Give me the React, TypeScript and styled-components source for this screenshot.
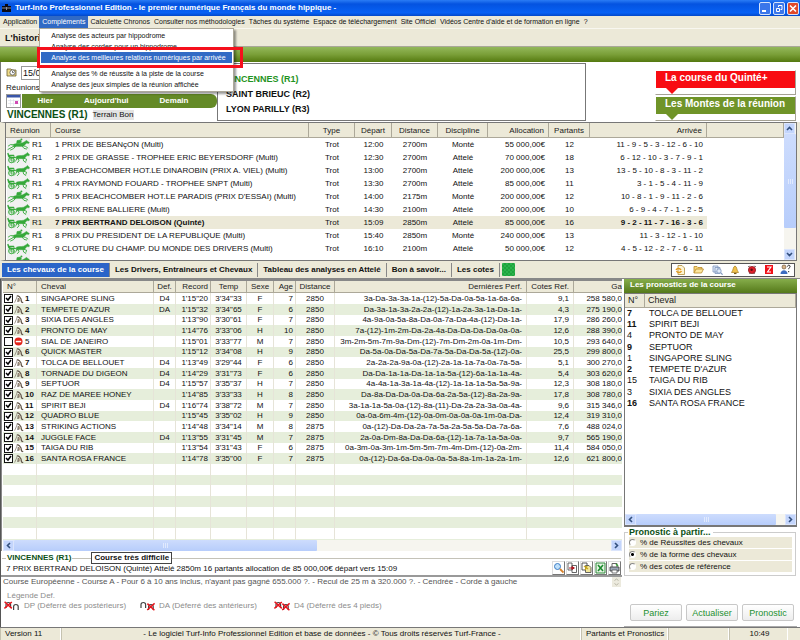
import React from 'react';
import styled, { createGlobalStyle, css } from 'styled-components';

const sans = '"Liberation Sans", Arial, sans-serif';
const beige = '#ece9d8';
const blue = '#316ac5';

const Global = createGlobalStyle`
  *, *::before, *::after { box-sizing: border-box; }
  body { margin: 0; font: 8px/12px ${sans}; color: #111; background: ${beige}; }
  button, input { font: inherit; color: inherit; margin: 0; }
  table { border-collapse: separate; border-spacing: 0; }
  svg { display: block; flex: none; }
`;

const Page = styled.div`
  display: flex;
  flex-direction: column;
  height: 100vh;
  overflow: hidden;
`;

const TitleBar = styled.header`
  display: flex;
  align-items: center;
  gap: 3px;
  height: 16px;
  flex: none;
  padding: 0 1px;
  background: linear-gradient(#2a7cf5, #0453e0 25%, #0761f5 80%, #0348c8);
`;
const Title = styled.h1`
  flex: 1;
  margin: 0;
  font: bold 8px/14px ${sans};
  color: #fff;
  white-space: nowrap;
`;
const WindowButton = styled.button<{ $close?: boolean }>`
  width: 12px;
  height: 13px;
  padding: 1px;
  margin-left: -1px;
  border: 1px solid #d5e3fb;
  border-radius: 2px;
  background: ${(p) => (p.$close ? '#e0492a' : '#3a76ea')};
`;

const MenuBar = styled.nav`
  position: relative;
  z-index: 2;
  display: flex;
  height: 12px;
  flex: none;
  padding-left: 1px;
  background: ${beige};
`;
const MenuButton = styled.button<{ $open?: boolean }>`
  height: 12px;
  padding: 0 ${(p) => (p.$open ? '3px' : '2px')};
  border: 0;
  background: ${(p) => (p.$open ? blue : 'transparent')};
  color: ${(p) => (p.$open ? '#fff' : '#111')};
  font: 7px/12px ${sans};
  white-space: nowrap;
`;
const MenuGroup = styled.div`
  position: relative;
`;
const Dropdown = styled.div`
  position: absolute;
  top: 12px;
  left: 0;
  width: 195px;
  padding: 1px;
  border: 1px solid #aca899;
  background: #fff;
  box-shadow: 2px 2px 2px rgba(0, 0, 0, 0.4);
`;
const DropItem = styled.button<{ $active?: boolean }>`
  display: block;
  width: 100%;
  height: 11px;
  padding: 0 10px;
  border: 0;
  text-align: left;
  font: 7px/11px ${sans};
  background: ${(p) => (p.$active ? blue : '#fff')};
  color: ${(p) => (p.$active ? '#fff' : '#111')};
  white-space: nowrap;
`;
const DropGap = styled.div`
  height: 5px;
`;
const Highlight = styled.div`
  position: absolute;
  top: 31px;
  left: -2px;
  width: 206px;
  height: 21px;
  border: 3px solid #f5101c;
  pointer-events: none;
`;

const Caption = styled.div`
  height: 19px;
  flex: none;
  padding: 0 5px;
  font: bold 9px/18px ${sans};
  color: #111;
  background: ${beige};
  border-top: 1px solid #f8f7f0;
  border-bottom: 1px solid #a9a898;
`;
const GreenBand = styled.div`
  height: 15px;
  flex: none;
  background: linear-gradient(#93b85a, #7a9f38 50%, #54790f);
`;

const TopPanel = styled.section`
  display: flex;
  height: 60px;
  flex: none;
  padding: 1px 4px 1px 5px;
  background: #fff;
  border-left: 1px solid #777;
`;
const DateSide = styled.div`
  width: 211px;
  display: flex;
  flex-direction: column;
`;
const DateRow = styled.div`
  display: flex;
  align-items: center;
  gap: 4px;
  height: 19px;
`;
const DateInput = styled.input`
  width: 80px;
  height: 14px;
  padding: 0 1px;
  border: 1px solid #999;
  background: #fff;
  font: 9px/12px ${sans};
`;
const SmallLabel = styled.label`
  height: 11px;
  line-height: 10px;
`;
const DayRow = styled.div`
  display: flex;
  gap: 1px;
  height: 14px;
`;
const CalendarButton = styled.button`
  width: 15px;
  height: 14px;
  padding: 0;
  border: 1px solid #999;
  background: #fff;
`;
const DayBar = styled.div`
  flex: 1;
  display: flex;
  justify-content: space-around;
  background: #648a27;
  border-radius: 0 6px 6px 0;
  padding: 0 13px 0 0;
`;
const DayButton = styled.button`
  border: 0;
  padding: 0;
  background: none;
  color: #fff;
  font: bold 8px/14px ${sans};
`;
const VenueRow = styled.div`
  display: flex;
  align-items: center;
  gap: 5px;
  padding-left: 1px;
  height: 13px;
`;
const Venue = styled.strong`
  font: bold 10px/12px ${sans};
  color: #0b4f14;
`;
const Ground = styled.span`
  background: #e3e3e3;
  line-height: 10px;
`;
const Meetings = styled.ul`
  flex: 1;
  max-width: 369px;
  margin: 0;
  padding: 8px 8px 0;
  list-style: none;
  border: 1px solid #777;
  background: #fff;
`;
const Meeting = styled.li<{ $active?: boolean }>`
  font: bold 9px/15px ${sans};
  color: ${(p) => (p.$active ? '#1f9322' : '#111')};
`;
const Badges = styled.div`
  display: flex;
  flex-direction: column;
  gap: 1px;
  width: 141px;
  margin-left: auto;
  padding-top: 7px;
`;
const Badge = styled.button`
  display: flex;
  flex-direction: column;
  align-items: flex-start;
  height: 25px;
  padding: 0;
  border: 1px solid;
  border-color: #fff #a5a294 #a5a294 #fff;
  background: #fff;
  text-align: left;
`;
const BadgeText = styled.span<{ $color: string }>`
  align-self: stretch;
  height: 17px;
  padding-left: 9px;
  background: ${(p) => p.$color};
  color: #fff;
  font: bold 10px/14px ${sans};
`;
const BadgeTip = styled.span<{ $color: string }>`
  width: 0;
  height: 0;
  margin-left: 10px;
  border: 6px solid transparent;
  border-top-color: ${(p) => p.$color};
  border-bottom-width: 0;
`;

const headCell = css`
  background: ${beige};
  border-right: 1px solid #aca899;
  border-bottom: 1px solid #aca899;
  font-weight: normal;
  color: #222;
`;

const RaceBox = styled.section`
  display: flex;
  height: 139px;
  flex: none;
  margin: 0 3px 0 0;
  border: solid #777;
  border-width: 1px 1px 1px 5px;
  border-left-color: ${beige};
  background: #fff;
  overflow: hidden;
`;
const RaceScroll = styled.div`
  flex: 1;
  overflow: hidden;
  border-left: 1px solid #777;
`;
const RaceTable = styled.table`
  width: 100%;
  table-layout: fixed;
  th { ${headCell} height: 15px; padding: 0 4px; line-height: 13px; }
  td { height: 13px; padding: 0 4px; line-height: 13px; white-space: nowrap; }
`;
type Align = 'left' | 'center' | 'right';
const Th = styled.th<{ $align?: Align }>`
  text-align: ${(p) => p.$align ?? 'left'};
  white-space: nowrap;
`;
const Td = styled.td<{ $align?: Align; $bold?: boolean }>`
  text-align: ${(p) => p.$align ?? 'left'};
  font-weight: ${(p) => (p.$bold ? 'bold' : 'normal')};
`;
const RaceRow = styled.tr<{ $selected?: boolean }>`
  td:not(:last-child) { background: ${(p) => (p.$selected ? beige : '#fff')}; }
  && td:first-child { padding: 0 1px; }
`;
const Meet = styled.span`
  display: flex;
  gap: 2px;
  height: 13px;
  svg { background: #f1f1f1; }
`;

const VScroll = styled.div`
  width: 12px;
  display: flex;
  flex-direction: column;
  background: #f6f5ef;
`;
const HScroll = styled.div`
  display: flex;
  flex: none;
  height: 11px;
  background: #f6f5ef;
`;
const ScrollButton = styled.button`
  width: 11px;
  height: 11px;
  flex: none;
  padding: 1px;
  border: 1px solid #dbe5fc;
  background: #c3d5fc;
`;
const Thumb = styled.div<{ $share: string }>`
  flex: 0 0 ${(p) => p.$share};
  display: flex;
  align-items: center;
  justify-content: center;
  background: linear-gradient(#cddcfd, #b7cdfb);
  border-radius: 1px;
`;
const Spacer = styled.div`
  flex: 1;
`;

const TabRow = styled.div`
  display: flex;
  align-items: center;
  height: 17px;
  flex: none;
  padding: 0 5px 0 2px;
  background: ${beige};
`;
const Tab = styled.button<{ $active?: boolean }>`
  height: 14px;
  padding: 0 5px;
  border: 0;
  border-right: 1px solid #888;
  background: ${(p) => (p.$active ? '#2a64c8' : 'transparent')};
  color: ${(p) => (p.$active ? '#fff' : '#111')};
  font: bold 8px/14px ${sans};
  white-space: nowrap;
`;
const Gem = styled.span`
  width: 13px;
  height: 13px;
  margin-left: 2px;
  border-radius: 1px;
  background: repeating-conic-gradient(#1fa33c 0 25%, #2ab24b 0 50%) 0 0 / 4px 4px;
`;
const ToolBox = styled.div`
  display: flex;
  align-items: center;
  justify-content: space-between;
  width: 124px;
  height: 14px;
  margin-left: auto;
  padding: 0 3px;
  border: 1px solid #555;
  background: #fff;
`;
const IconButton = styled.button`
  padding: 0;
  border: 0;
  background: none;
`;

const Main = styled.main`
  flex: 1;
  min-height: 0;
  display: grid;
  grid-template-columns: minmax(0, 1fr) 173px;
  gap: 2px;
  padding: 0 3px 0 0;
  background: #fff;
  border-top: 1px solid #888;
  border-bottom: 1px solid #777;
`;
const Left = styled.div`
  min-height: 0;
  display: flex;
  flex-direction: column;
  border-left: 1px solid #555;
`;
const HorseBox = styled.section`
  flex: none;
  height: 272px;
  display: flex;
  flex-direction: column;
  overflow: hidden;
  padding-left: 1px;
  border: solid #888;
  border-width: 2px 0 0 1px;
`;
const HorseScroll = styled.div`
  flex: 1;
  min-height: 0;
  overflow: hidden;
`;
const HorseTable = styled.table`
  width: 100%;
  table-layout: fixed;
  th { ${headCell} height: 12px; padding: 0 4px; line-height: 11px; }
  td { height: 11px; padding: 0 4px; line-height: 10px; white-space: nowrap; border-right: 1px solid #e6e4d8; }
  th:nth-child(n + 3):nth-child(-n + 8), td:nth-child(n + 3):nth-child(-n + 8) { padding: 0 2px; }
  th:last-child, td:last-child { padding: 0; border-right: 0; }
  tr:nth-child(3n) td { height: 10px; }
  tr:nth-child(even) td { background: #e6eedb; }
`;
const NumTd = styled(Td)`
  && { padding: 0 2px 0 1px; }
`;
const HorseLabel = styled.label<{ $bold?: boolean }>`
  display: flex;
  align-items: center;
  gap: 1px;
  height: 10px;
  font-weight: ${(p) => (p.$bold ? 'bold' : 'normal')};
`;
const tick =
  "url(\"data:image/svg+xml,%3Csvg xmlns='http://www.w3.org/2000/svg' viewBox='0 0 7 7'%3E%3Cpath d='M1 3l2 2 3-4' fill='none' stroke='black' stroke-width='1.5'/%3E%3C/svg%3E\")";
const Check = styled.input`
  appearance: none;
  width: 9px;
  height: 9px;
  flex: none;
  border: 1px solid #111;
  background: #fff;
  &:checked { background: #fff ${tick} center / 7px 7px no-repeat; }
`;

const Summary = styled.section`
  flex: none;
  padding: 0 1px 0 1px;
`;
const SummaryTop = styled.div`
  display: flex;
  align-items: center;
  height: 14px;
`;
const Rule = styled.span<{ $width?: string }>`
  flex: ${(p) => (p.$width ? `0 0 ${p.$width}` : '1')};
  height: 1px;
  background: #c4c2b8;
`;
const SummaryVenue = styled.strong`
  padding: 0 1px;
  font: bold 8px/12px ${sans};
  color: #0b4f14;
`;
const Difficulty = styled.span`
  padding: 0 2px;
  border: 1px solid #444;
  background: #fff;
  font: bold 8px/10px ${sans};
`;
const SummaryBottom = styled.div`
  display: flex;
  align-items: flex-end;
  justify-content: space-between;
  height: 10px;
  padding-left: 4px;
`;
const SummaryLine = styled.p`
  margin: 0;
  line-height: 12px;
  white-space: nowrap;
`;
const Tools = styled.div`
  display: flex;
  gap: 1px;
`;
const ToolButton = styled.button`
  width: 13px;
  height: 14px;
  padding: 0;
  border: 1px solid;
  border-color: #ddd #777 #777 #ddd;
  background: #fff;
`;
const Conditions = styled.div`
  display: flex;
  justify-content: space-between;
  height: 12px;
  flex: none;
  margin: 0 0 4px;
  border-top: 2px solid #999;
  padding: 0 1px 0 2px;
  line-height: 10px;
  color: #555;
  white-space: nowrap;
`;
const Spin = styled.span`
  display: grid;
  place-items: center;
  width: 9px;
  background: #eceade;
`;
const Legend = styled.div`
  padding: 0 3px;
  color: #8c8c8c;
  line-height: 10px;
`;
const LegendTitle = styled.div`
  padding-left: 3px;
`;
const LegendItems = styled.div`
  display: grid;
  grid-template-columns: 135px 135px auto;
`;
const LegendItem = styled.span`
  display: flex;
  align-items: center;
  gap: 4px;
  white-space: nowrap;
`;

const Right = styled.aside`
  min-height: 0;
  display: flex;
  flex-direction: column;
  border-bottom: 1px solid #aaa;
`;
const RightTitle = styled.h2`
  margin: 0;
  height: 14px;
  flex: none;
  padding-left: 6px;
  font: bold 8px/12px ${sans};
  color: #fff;
  background: linear-gradient(#86ad4b, #55791a);
`;
const PickBox = styled.div`
  height: 234px;
  flex: none;
  display: flex;
  flex-direction: column;
  border: 1px solid #777;
  border-bottom: 2px solid #777;
`;
const PickTable = styled.table`
  width: 100%;
  table-layout: fixed;
  font-size: 9px;
  th { ${headCell} height: 14px; padding: 0 3px; line-height: 13px; text-align: left; }
  td { height: 11px; padding: 0 4px; line-height: 11px; white-space: nowrap; }
  td:first-child { padding: 0 2px; }
  tr:nth-child(4n) td { height: 12px; }
`;
const Basis = styled.fieldset`
  margin: 1px 1px 0 0;
  padding: 0 3px 2px 4px;
  border: 1px solid #ccc;
  min-width: 0;
`;
const BasisLegend = styled.legend`
  padding: 0 2px 0 1px;
  margin-left: -1px;
  font: bold 9px/9px ${sans};
  color: #0b4f14;
`;
const RadioLabel = styled.label`
  display: flex;
  align-items: center;
  gap: 4px;
  height: 11px;
  margin-bottom: 1px;
  line-height: 11px;
  background: ${beige};
`;
const Radio = styled.input`
  appearance: none;
  width: 7px;
  height: 7px;
  flex: none;
  border: 1px solid;
  border-color: #888 #fff #fff #888;
  border-radius: 50%;
  background: #fff;
  &:checked { background: radial-gradient(#000 0 1px, #fff 2px); }
`;
const Actions = styled.div`
  display: flex;
  gap: 4px;
  margin: auto 3px 5px 6px;
`;
const Action = styled.button`
  flex: 1;
  height: 17px;
  padding: 0;
  border: 1px solid #c8c8c8;
  border-radius: 2px;
  background: linear-gradient(#fff, #ededed);
  color: #1e9030;
  font: 9px/14px ${sans};
`;

const Status = styled.footer`
  display: grid;
  grid-template-columns: 61px 1fr 87px 61px 59px 12px;
  height: 12px;
  flex: none;
  background: ${beige};
  line-height: 12px;
`;
const StatusCell = styled.span<{ $center?: boolean }>`
  padding: 0 2px 0 4px;
  border-left: 1px solid #c5c2b0;
  border-right: 1px solid #fff;
  text-align: ${(p) => (p.$center ? 'center' : 'left')};
  white-space: nowrap;
`;

const GREEN = '#35a83a';
const Rider = () => (
  <svg width="23" height="13" viewBox="0 0 23 13" fill="none" stroke={GREEN} strokeLinecap="round">
    <path d="M6 6.6C8 5.2 12 5.6 15 5L18.4 3.2 19.2 2.2 22.4 4.4 21.8 5.4 19.6 5.2 16.6 8C14 8.8 10 8.2 7 9z" fill={GREEN} strokeWidth=".3" />
    <path d="M7 8L4 9.8 1 11.4M8.4 8.4L6.6 10.6 3.6 12M6 6.8L3.5 6.6 1.4 8M15.5 7.6L18.6 8.4 20.8 10M15 8L17 10.4 19.6 11" strokeWidth=".9" />
    <path d="M9.6 5.4L10 2.6 13.4 2 14.6 4.2 13 5z" fill={GREEN} strokeWidth=".5" />
    <circle cx="14.4" cy="1.4" r="1" fill={GREEN} stroke="none" />
  </svg>
);
const Sulky = () => (
  <svg width="23" height="13" viewBox="0 0 23 13" fill="none" stroke={GREEN} strokeLinecap="round">
    <path d="M9.4 5.2C11 4.2 14 4.8 16.6 4.2L19.6 2.4 20.4 1.4 22.6 3.8 22 4.8 20 4.6 17.4 7.4C15 8 12 7.4 9.6 8z" fill={GREEN} strokeWidth=".4" />
    <path d="M10 7.4L8.8 9.6 7 11.4M11 7.6L12 9.8 10.4 11.6M16.6 7.2L19.6 8.2 19 10.2M16 7.4L16.6 10 18.8 11.4M3 7L15 5.8" strokeWidth=".9" />
    <circle cx="4.4" cy="9" r="2.8" strokeWidth=".9" />
    <path d="M1 2.6L2 5.8 4.6 7 7.4 6.2M2 4.4L6.6 4.6" strokeWidth="1.5" />
    <path d="M2 9H7M4.4 6.6V11.4M2.6 7.2l3.6 3.6" strokeWidth=".5" />
  </svg>
);
const Shoe = () => (
  <svg width="10" height="10" viewBox="0 0 10 10" fill="none">
    <path d="M.6 8.6L2.6 4 3.4 1" stroke="#8d8375" strokeWidth=".8" />
    <path d="M3.4 1.6l2 1L7 5l.6 3 1.6.6M4.4 4L4 8" stroke="#62564a" strokeWidth="1.2" />
    <path d="M4.8 4.4L6.2 7.4" stroke="#b3a28b" strokeWidth="1.4" />
  </svg>
);
const NoEntry = () => (
  <svg width="10" height="9" viewBox="0 0 10 9">
    <circle cx="4.5" cy="4.5" r="4" fill="#e2231a" />
    <path d="M1.8 3.8h5.4v1.5H1.8z" fill="#fff" />
  </svg>
);
const Arrow = ({ d }: { d: string }) => (
  <svg width="7" height="7" viewBox="0 0 7 7" fill="none" stroke="#33507e" strokeWidth="1.6">
    <path d={d} />
  </svg>
);
const UP = 'M1 5l2.5-2.5L6 5';
const DOWN = 'M1 2l2.5 2.5L6 2';
const LEFT = 'M5 1L2.5 3.5 5 6';
const RIGHT = 'M2 1l2.5 2.5L2 6';
const Grip = () => (
  <svg width="7" height="5" viewBox="0 0 7 5" stroke="#e8effe">
    <path d="M1.5 0v5M3.5 0v5M5.5 0v5" strokeWidth=".8" />
  </svg>
);
const HoofPair = ({ front, back }: { front: boolean; back: boolean }) => (
  <svg width="16" height="10" viewBox="0 0 16 10" fill="none">
    <path d="M2 7V3.6C2 .8 6.6.8 6.6 3.6V7M9.6 9V5.6c0-2.8 4.6-2.8 4.6 0V9" stroke="#444" strokeWidth="1.2" />
    {front && <path d="M.6 .8L7.8 7.4M7.8 1L.4 7.4" stroke="#e8141c" strokeWidth="1.5" />}
    {back && <path d="M8.4 2.6L15.4 9.2M15.6 2.4L8.2 9" stroke="#e8141c" strokeWidth="1.5" />}
  </svg>
);

const races = [
  ['m', '1 PRIX DE BESANçON (Multi)', '12:00', '2700m', 'Monté', '55 000,00€', '12', '11 - 9 - 5 - 3 - 12 - 6 - 10'],
  ['a', '2 PRIX DE GRASSE - TROPHEE ERIC BEYERSDORF (Multi)', '12:30', '2700m', 'Attelé', '70 000,00€', '18', '6 - 12 - 10 - 3 - 7 - 9 - 1'],
  ['a', '3 P.BEACHCOMBER HOT.LE DINAROBIN (PRIX A. VIEL) (Multi)', '13:00', '2700m', 'Attelé', '200 000,00€', '13', '13 - 5 - 10 - 8 - 3 - 11 - 2'],
  ['a', '4 PRIX RAYMOND FOUARD - TROPHEE SNPT (Multi)', '13:30', '2700m', 'Attelé', '85 000,00€', '11', '3 - 1 - 5 - 4 - 11 - 9'],
  ['m', "5 PRIX BEACHCOMBER HOT.LE PARADIS (PRIX D'ESSAI) (Multi)", '14:00', '2175m', 'Monté', '200 000,00€', '12', '10 - 8 - 1 - 9 - 11 - 2 - 6'],
  ['a', '6 PRIX RENE BALLIERE (Multi)', '14:30', '2100m', 'Attelé', '200 000,00€', '10', '6 - 9 - 4 - 7 - 1 - 2 - 5'],
  ['a', '7 PRIX BERTRAND DELOISON (Quinté)', '15:09', '2850m', 'Attelé', '85 000,00€', '16', '9 - 2 - 11 - 7 - 16 - 3 - 6'],
  ['m', '8 PRIX DU PRESIDENT DE LA REPUBLIQUE (Multi)', '15:40', '2850m', 'Monté', '240 000,00€', '13', '11 - 3 - 12 - 1 - 10'],
  ['a', '9 CLOTURE DU CHAMP. DU MONDE DES DRIVERS (Multi)', '16:10', '2100m', 'Attelé', '50 000,00€', '12', '4 - 5 - 12 - 2 - 7 - 6 - 11'],
];

const horses = [
  ['SINGAPORE SLING', 'D4', `1'15"20`, `3'34"33`, 'F', '7', '2850', '3a-Da-3a-3a-1a-(12)-5a-Da-0a-5a-1a-6a-6a-', '9,1', '258 580,0'],
  ["TEMPETE D'AZUR", 'DA', `1'15"32`, `3'34"65`, 'F', '6', '2850', 'Da-3a-1a-3a-2a-2a-(12)-1a-2a-3a-1a-Da-1a-', '4,3', '275 190,0'],
  ['SIXIA DES ANGLES', '', `1'13"90`, `3'30"61`, 'F', '7', '2850', '4a-9a-0a-5a-8a-Da-0a-7a-Da-4a-(12)-Da-1a-', '17,9', '286 260,0'],
  ['PRONTO DE MAY', '', `1'14"76`, `3'33"06`, 'H', '10', '2850', '7a-(12)-1m-2m-Da-2a-4a-Da-Da-Da-Da-0a-0a-', '12,6', '288 390,0'],
  ['SIAL DE JANEIRO', '', `1'15"01`, `3'33"77`, 'M', '7', '2850', '3m-2m-5m-7m-9a-Dm-(12)-7m-Dm-2m-0a-1m-Dm-', '10,5', '293 640,0'],
  ['QUICK MASTER', '', `1'15"12`, `3'34"08`, 'H', '9', '2850', 'Da-5a-0a-Da-5a-Da-7a-5a-Da-Da-5a-(12)-0a-', '25,5', '299 800,0'],
  ['TOLCA DE BELLOUET', 'D4', `1'13"49`, `3'29"44`, 'F', '6', '2850', '2a-2a-2a-9a-0a-(12)-2a-1a-1a-7a-0a-7a-5a-', '5,1', '300 270,0'],
  ['TORNADE DU DIGEON', 'D4', `1'14"29`, `3'31"73`, 'F', '6', '2850', 'Da-Da-1a-1a-Da-1a-1a-5a-(12)-6a-1a-1a-4a-', '5,4', '303 620,0'],
  ['SEPTUOR', 'D4', `1'15"57`, `3'35"37`, 'H', '7', '2850', '4a-4a-1a-3a-1a-4a-(12)-1a-1a-1a-5a-5a-9a-', '12,3', '308 180,0'],
  ['RAZ DE MAREE HONEY', '', `1'14"85`, `3'33"33`, 'H', '8', '2850', 'Da-8a-Da-Da-0a-Da-6a-2a-5a-(12)-8a-2a-9a-', '17,8', '308 780,0'],
  ['SPIRIT BEJI', 'D4', `1'16"74`, `3'38"72`, 'M', '7', '2850', '3a-1a-1a-5a-0a-(12)-8a-(11)-Da-2a-2a-3a-0a-4a-', '9,6', '315 346,0'],
  ['QUADRO BLUE', '', `1'15"45`, `3'35"02`, 'H', '9', '2850', '0a-0a-6m-4m-(12)-0a-0m-0a-0a-0a-1m-0a-Da-', '12,4', '319 310,0'],
  ['STRIKING ACTIONS', '', `1'14"48`, `3'34"14`, 'M', '8', '2875', '0a-(12)-Da-Da-2a-7a-5a-2a-5a-5a-Da-7a-6a-', '7,6', '488 024,0'],
  ['JUGGLE FACE', 'D4', `1'13"55`, `3'31"45`, 'M', '7', '2875', '2a-0a-Dm-8a-Da-Da-6a-(12)-1a-7a-1a-5a-0a-', '9,7', '565 190,0'],
  ['TAIGA DU RIB', '', `1'13"54`, `3'31"43`, 'F', '6', '2875', '0a-3m-0a-3m-1m-5m-5m-7m-4m-Dm-(12)-0a-2m-', '11,4', '584 050,0'],
  ['SANTA ROSA FRANCE', '', `1'14"78`, `3'35"00`, 'F', '7', '2875', '0a-(12)-Da-6a-Da-0a-0a-5a-8a-1m-1a-2a-1m-', '12,6', '621 800,0'],
];

const picks: [string, string, boolean][] = [
  ['7', 'TOLCA DE BELLOUET', true],
  ['11', 'SPIRIT BEJI', true],
  ['4', 'PRONTO DE MAY', false],
  ['9', 'SEPTUOR', true],
  ['1', 'SINGAPORE SLING', false],
  ['2', "TEMPETE D'AZUR", true],
  ['15', 'TAIGA DU RIB', false],
  ['3', 'SIXIA DES ANGLES', false],
  ['16', 'SANTA ROSA FRANCE', true],
];

const menuAfter = [
  'Calculette Chronos',
  'Consulter nos méthodologies',
  'Tâches du système',
  'Espace de téléchargement',
  'Site Officiel',
  "Vidéos Centre d'aide et de formation en ligne",
  '?',
];

const horseAligns: Align[] = ['left', 'center', 'right', 'center', 'center', 'right', 'center', 'right', 'right', 'right'];
const horseHeads = ['Cheval', 'Def.', 'Record', 'Temp', 'Sexe', 'Age', 'Distance', 'Dernières Perf.', 'Cotes Ref.', 'Ga'];

export default function App() {
  return (
    <Page>
      <Global />
      <TitleBar>
        <svg width="11" height="10" viewBox="0 0 11 10">
          <path d="M1 3h9v6H1zM4 1h3v2H4z" fill="#0a0a14" />
          <path d="M1 5h9M5.5 4v3" stroke="#8a8fa0" />
        </svg>
        <Title>Turf-Info Professionnel Edition - le premier numérique Français du monde hippique -</Title>
        <WindowButton aria-label="Réduire">
          <svg width="8" height="9" viewBox="0 0 8 9"><path d="M1 7h4" stroke="#fff" strokeWidth="2" /></svg>
        </WindowButton>
        <WindowButton aria-label="Restaurer">
          <svg width="8" height="9" viewBox="0 0 8 9" fill="none" stroke="#fff"><path d="M1.5 4.5h3v3h-3zM3.5 3V1.5h3.5v4H5.5" /></svg>
        </WindowButton>
        <WindowButton $close aria-label="Fermer">
          <svg width="8" height="9" viewBox="0 0 8 9" stroke="#fff" strokeWidth="1.6"><path d="M1 1.5l6 6M7 1.5l-6 6" /></svg>
        </WindowButton>
      </TitleBar>
      <MenuBar>
        <MenuButton>Application</MenuButton>
        <MenuGroup>
          <MenuButton $open>Compléments</MenuButton>
          <Dropdown>
            <DropItem>Analyse des acteurs par hippodrome</DropItem>
            <DropItem>Analyse des cordes pour un hippodrome</DropItem>
            <DropItem $active>Analyse des meilleures relations numériques par arrivée</DropItem>
            <DropGap />
            <DropItem>Analyse des % de réussite à la piste de la course</DropItem>
            <DropItem>Analyse des jeux simples de la réunion affichée</DropItem>
          </Dropdown>
          <Highlight />
        </MenuGroup>
        {menuAfter.map((m) => (
          <MenuButton key={m}>{m}</MenuButton>
        ))}
      </MenuBar>
      <Caption>L'histori</Caption>
      <GreenBand />

      <TopPanel>
        <DateSide>
          <DateRow>
            <svg width="11" height="11" viewBox="0 0 11 11">
              <path d="M1 2h4l1 1h4v6H1z" fill="#f0dc8a" stroke="#6b5d2c" strokeWidth=".8" />
              <circle cx="6.5" cy="5.5" r="2.6" fill="#fff" stroke="#555" strokeWidth=".8" />
              <path d="M6.5 4v1.6h1.4" stroke="#333" fill="none" strokeWidth=".7" />
            </svg>
            <DateInput id="day" defaultValue="15/0" />
          </DateRow>
          <Spacer />
          <SmallLabel htmlFor="day">Réunions</SmallLabel>
          <DayRow>
            <CalendarButton aria-label="Calendrier">
              <svg width="13" height="12" viewBox="0 0 13 12">
                <path d="M0 0h13v2.5H0z" fill="#3a56a8" />
                <path d="M1 5.5h11M1 8.5h11M3.5 4v7M6.5 4v7" stroke="#d9dde8" strokeWidth=".6" />
                <path d="M8 6h3v3H8z" fill="#d04ab4" />
              </svg>
            </CalendarButton>
            <DayBar>
              <DayButton>Hier</DayButton>
              <DayButton>Aujourd'hui</DayButton>
              <DayButton>Demain</DayButton>
            </DayBar>
          </DayRow>
          <VenueRow>
            <Venue>VINCENNES (R1)</Venue>
            <Ground>Terrain Bon</Ground>
          </VenueRow>
        </DateSide>
        <Meetings>
          <Meeting $active>VINCENNES (R1)</Meeting>
          <Meeting>SAINT BRIEUC (R2)</Meeting>
          <Meeting>LYON PARILLY (R3)</Meeting>
        </Meetings>
        <Badges>
          <Badge>
            <BadgeText $color="#f80c12">La course du Quinté+</BadgeText>
            <BadgeTip $color="#f80c12" />
          </Badge>
          <Badge>
            <BadgeText $color="#6f9428">Les Montes de la réunion</BadgeText>
            <BadgeTip $color="#6f9428" />
          </Badge>
        </Badges>
      </TopPanel>

      <RaceBox>
        <RaceScroll>
          <RaceTable>
            <colgroup>
              <col width="45" /><col width="258" /><col width="46" /><col width="37" /><col width="46" />
              <col width="50" /><col width="61" /><col width="41" /><col width="117" /><col />
            </colgroup>
            <thead>
              <tr>
                <Th>Réunion</Th><Th>Course</Th><Th $align="center">Type</Th><Th $align="center">Départ</Th>
                <Th $align="center">Distance</Th><Th $align="center">Discipline</Th><Th $align="right">Allocation</Th>
                <Th $align="center">Partants</Th><Th $align="right">Arrivée</Th><Th />
              </tr>
            </thead>
            <tbody>
              {races.map(([kind, name, time, dist, disc, purse, n, result], i) => (
                <RaceRow key={name} $selected={i === 6}>
                  <Td><Meet>{kind === 'm' ? <Rider /> : <Sulky />}R1</Meet></Td>
                  <Td $bold={i === 6}>{name}</Td>
                  <Td $align="center">Trot</Td>
                  <Td $align="center">{time}</Td>
                  <Td $align="center">{dist}</Td>
                  <Td $align="center">{disc}</Td>
                  <Td $align="right">{purse}</Td>
                  <Td $align="center">{n}</Td>
                  <Td $align="right" $bold={i === 6}>{result}</Td>
                  <Td />
                </RaceRow>
              ))}
              <RaceRow>
                <Td><Meet><Rider /></Meet></Td>
                <Td colSpan={9} />
              </RaceRow>
            </tbody>
          </RaceTable>
        </RaceScroll>
        <VScroll>
          <ScrollButton aria-label="Haut"><Arrow d={UP} /></ScrollButton>
          <Thumb $share="94px"><Grip /></Thumb>
          <Spacer />
          <ScrollButton aria-label="Bas"><Arrow d={DOWN} /></ScrollButton>
        </VScroll>
      </RaceBox>

      <TabRow>
        <Tab $active>Les chevaux de la course</Tab>
        <Tab>Les Drivers, Entraineurs et Chevaux</Tab>
        <Tab>Tableau des analyses en Attelé</Tab>
        <Tab>Bon à savoir...</Tab>
        <Tab>Les cotes</Tab>
        <Gem />
        <ToolBox>
          <IconButton aria-label="Actualiser la page">
            <svg width="11" height="10" viewBox="0 0 11 10">
              <path d="M3 .5h4l2.5 2.5v6.5H3z" fill="#fdf4d4" stroke="#b0903c" strokeWidth=".8" />
              <path d="M1 5c1-2 4-2 5 0M6.5 6c-1 2-4 2-5 0" fill="none" stroke="#e39a1c" strokeWidth="1.4" />
            </svg>
          </IconButton>
          <IconButton aria-label="Ouvrir">
            <svg width="11" height="9" viewBox="0 0 11 9">
              <path d="M1 8V1.5h3l1 1h4V4" fill="#f8d67a" stroke="#b98a2a" strokeWidth=".8" />
              <path d="M1 8l2-4h7.5l-2 4z" fill="#fbe59e" stroke="#b98a2a" strokeWidth=".8" />
            </svg>
          </IconButton>
          <IconButton aria-label="Rechercher">
            <svg width="11" height="10" viewBox="0 0 11 10" fill="#dfe9f8" stroke="#7d95bd" strokeWidth=".8">
              <path d="M1 1h5v6H1zM3 2.5h5v6H3z" />
              <circle cx="7" cy="6" r="2.2" />
              <path d="M8.6 7.6l2 2" strokeWidth="1.2" />
            </svg>
          </IconButton>
          <IconButton aria-label="Alertes">
            <svg width="10" height="10" viewBox="0 0 10 10">
              <path d="M5 1C3 1.5 3.5 5 1.5 7.5h7C6.5 5 7 1.5 5 1z" fill="#f0c14a" stroke="#a87c1c" strokeWidth=".7" />
              <path d="M4 8.5h2.5" stroke="#7c5c16" strokeWidth="1.2" />
            </svg>
          </IconButton>
          <IconButton aria-label="Réveil">
            <svg width="10" height="10" viewBox="0 0 10 10">
              <circle cx="5" cy="5" r="3.6" fill="#e0202a" stroke="#8a1a20" strokeWidth=".8" />
              <circle cx="4.6" cy="4.8" r="1.2" fill="#5a1014" />
              <path d="M1.4 2l1.2-1.2M8.6 2L7.4.8M2.4 9l.8-.8M7.6 9l-.8-.8" stroke="#40100f" />
            </svg>
          </IconButton>
          <IconButton aria-label="Zeturf">
            <svg width="8" height="9" viewBox="0 0 8 9">
              <path d="M0 0h8v9H0z" fill="#f01018" />
              <path d="M2 2h4L2.5 7H6" fill="none" stroke="#fff" strokeWidth="1.1" />
            </svg>
          </IconButton>
          <IconButton aria-label="Aide">
            <svg width="11" height="11" viewBox="0 0 11 11">
              <circle cx="4" cy="3" r="2" fill="#d9b48a" stroke="#5d4426" strokeWidth=".6" />
              <path d="M.5 10c0-5 7-5 7 0z" fill="#3d6cc0" />
              <path d="M7.5 2.5c.2-2 3-1.5 2.5.3-.2.9-1.3 1-1.3 2.4M8.7 7v1.2" fill="none" stroke="#222" />
            </svg>
          </IconButton>
        </ToolBox>
      </TabRow>

      <Main>
        <Left>
          <HorseBox>
            <HorseScroll>
              <HorseTable>
                <colgroup>
                  <col width="34" /><col width="117" /><col width="22" /><col width="35" /><col width="36" />
                  <col width="27" /><col width="22" /><col width="39" /><col /><col width="47" /><col width="48" />
                </colgroup>
                <thead>
                  <tr>
                    <Th>N°</Th>
                    {horseHeads.map((h, i) => (
                      <Th key={h} $align={horseAligns[i]}>{h}</Th>
                    ))}
                  </tr>
                </thead>
                <tbody>
                  {horses.map((cells, i) => (
                    <tr key={cells[0]}>
                      <NumTd>
                        <HorseLabel $bold={i !== 4}>
                          <Check type="checkbox" defaultChecked={i !== 4} />
                          {i === 4 ? <NoEntry /> : <Shoe />}
                          {i + 1}
                        </HorseLabel>
                      </NumTd>
                      {cells.map((c, j) => (
                        <Td key={j} $align={horseAligns[j]}>{c}</Td>
                      ))}
                    </tr>
                  ))}
                  {Array.from({ length: 8 }, (_, i) => (
                    <tr key={i}>
                      {Array.from({ length: 11 }, (_, j) => (
                        <Td key={j} />
                      ))}
                    </tr>
                  ))}
                </tbody>
              </HorseTable>
            </HorseScroll>
            <HScroll>
              <ScrollButton aria-label="Gauche"><Arrow d={LEFT} /></ScrollButton>
              <Thumb $share="49%"><Grip /></Thumb>
              <Spacer />
              <ScrollButton aria-label="Droite"><Arrow d={RIGHT} /></ScrollButton>
            </HScroll>
          </HorseBox>
          <Summary>
            <SummaryTop>
              <Rule $width="4px" />
              <SummaryVenue>VINCENNES (R1)</SummaryVenue>
              <Rule $width="19px" />
              <Difficulty>Course très difficile</Difficulty>
              <Rule />
            </SummaryTop>
            <SummaryBottom>
              <SummaryLine>
                7 PRIX BERTRAND DELOISON (Quinté) Attelé 2850m 16 partants allocation de 85 000,00€ départ vers 15:09
              </SummaryLine>
              <Tools>
                <ToolButton aria-label="Loupe">
                  <svg width="11" height="12" viewBox="0 0 11 12">
                    <circle cx="4.5" cy="4.5" r="3" fill="#bfe0fa" stroke="#3c7cc4" />
                    <path d="M7 7l3.5 3.5" stroke="#d9822a" strokeWidth="1.8" />
                  </svg>
                </ToolButton>
                <ToolButton aria-label="PDF">
                  <svg width="11" height="12" viewBox="0 0 11 12">
                    <path d="M1 1h4v7H1zM5 3.5h4.5v7H5z" fill="#fff" stroke="#555" strokeWidth=".9" />
                    <path d="M2 6h4M5 4.6L7.4 6 5 7.4z" fill="#b01a24" stroke="#b01a24" />
                  </svg>
                </ToolButton>
                <ToolButton aria-label="Copier">
                  <svg width="11" height="12" viewBox="0 0 11 12">
                    <path d="M1 1h5v7H1z" fill="#fff" stroke="#444" strokeWidth=".9" />
                    <path d="M4.5 3.5h3.5l2 2v5H4.5z" fill="#f2e69a" stroke="#555" strokeWidth=".9" />
                    <path d="M3 4l4 3M6 4l-2 4" stroke="#c8a81c" strokeWidth="1.3" />
                  </svg>
                </ToolButton>
                <ToolButton aria-label="Excel">
                  <svg width="11" height="12" viewBox="0 0 11 12">
                    <path d="M1 1h9v10H1z" fill="#e6f4e4" stroke="#2f8a3a" />
                    <path d="M3 3l5 6M8 3L3 9" stroke="#1c8a2e" strokeWidth="1.6" />
                  </svg>
                </ToolButton>
                <ToolButton aria-label="Imprimer">
                  <svg width="11" height="12" viewBox="0 0 11 12">
                    <path d="M3 5V1.5h5V5" fill="#fff" stroke="#555" strokeWidth=".9" />
                    <path d="M1 5h9v4H1z" fill="#9aa6b8" stroke="#444" strokeWidth=".9" />
                    <path d="M3 8h5v3H3z" fill="#fff" stroke="#555" strokeWidth=".8" />
                    <path d="M7 2l2 2" stroke="#3aa33a" strokeWidth="1.4" />
                  </svg>
                </ToolButton>
              </Tools>
            </SummaryBottom>
          </Summary>
          <Conditions>
            <span>Course Européenne - Course A - Pour 6 à 10 ans inclus, n'ayant pas gagné 655.000 ?. - Recul de 25 m à 320.000 ?. - Cendrée - Corde à gauche</span>
            <Spin>
              <svg width="5" height="8" viewBox="0 0 5 8" fill="none" stroke="#b9b6a6">
                <path d="M.5 2.5l2-1.5 2 1.5M.5 5.5l2 1.5 2-1.5" />
              </svg>
            </Spin>
          </Conditions>
          <Legend>
            <LegendTitle>Légende Def.</LegendTitle>
            <LegendItems>
              <LegendItem><HoofPair front back={false} />DP (Déferré des postérieurs)</LegendItem>
              <LegendItem><HoofPair front={false} back />DA (Déferré des antérieurs)</LegendItem>
              <LegendItem><HoofPair front back />D4 (Déferré des 4 pieds)</LegendItem>
            </LegendItems>
          </Legend>
        </Left>

        <Right>
          <RightTitle>Les pronostics de la course</RightTitle>
          <PickBox>
            <PickTable>
              <colgroup><col width="20" /><col /></colgroup>
              <thead><tr><th>N°</th><th>Cheval</th></tr></thead>
              <tbody>
                {picks.map(([n, name, bold]) => (
                  <tr key={n}>
                    <Td $bold={bold}>{n}</Td>
                    <Td>{name}</Td>
                  </tr>
                ))}
              </tbody>
            </PickTable>
            <Spacer />
            <HScroll>
              <ScrollButton aria-label="Gauche"><Arrow d={LEFT} /></ScrollButton>
              <Thumb $share="82%"><Grip /></Thumb>
              <Spacer />
              <ScrollButton aria-label="Droite"><Arrow d={RIGHT} /></ScrollButton>
            </HScroll>
          </PickBox>
          <Basis>
            <BasisLegend>Pronostic à partir...</BasisLegend>
            <RadioLabel><Radio type="radio" name="basis" />% de Réussites des chevaux</RadioLabel>
            <RadioLabel><Radio type="radio" name="basis" defaultChecked />% de la forme des chevaux</RadioLabel>
            <RadioLabel><Radio type="radio" name="basis" />% des cotes de référence</RadioLabel>
          </Basis>
          <Actions>
            <Action>Pariez</Action>
            <Action>Actualiser</Action>
            <Action>Pronostic</Action>
          </Actions>
        </Right>
      </Main>

      <Status>
        <StatusCell>Version 11</StatusCell>
        <StatusCell $center>
          - Le logiciel Turf-Info Professionnel Edition et base de données - © Tous droits réservés Turf-France -
        </StatusCell>
        <StatusCell>Partants et Pronostics</StatusCell>
        <StatusCell />
        <StatusCell $center>10:49</StatusCell>
        <span />
      </Status>
    </Page>
  );
}
